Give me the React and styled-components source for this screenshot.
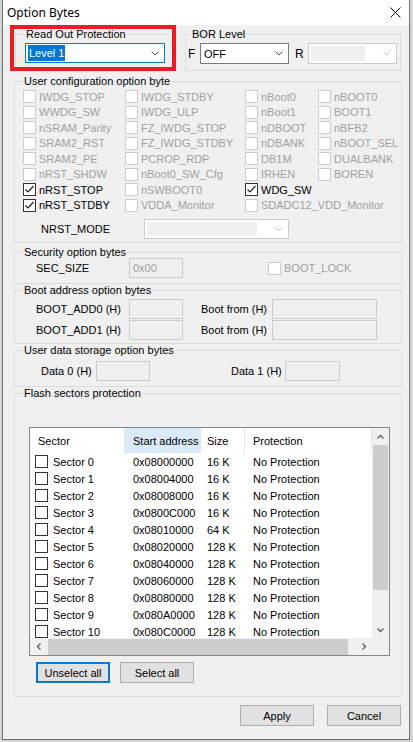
import styled, { createGlobalStyle } from "styled-components";

const GlobalStyle = createGlobalStyle`
  html, body {
    margin: 0;
    padding: 0;
  }
  body {
    width: 413px;
    height: 742px;
    overflow: hidden;
    background: #d4d4d4;
    font-family: "Liberation Sans", Arial, sans-serif;
    font-size: 11px;
    color: #000;
  }
`;

const opcoesColunas = [
  [
    ["IWDG_STOP"], ["WWDG_SW"], ["nSRAM_Parity"], ["SRAM2_RST"],
    ["SRAM2_PE"], ["nRST_SHDW"], ["nRST_STOP", true], ["nRST_STDBY", true],
  ],
  [
    ["IWDG_STDBY"], ["IWDG_ULP"], ["FZ_IWDG_STOP"], ["FZ_IWDG_STDBY"],
    ["PCROP_RDP"], ["nBoot0_SW_Cfg"], ["nSWBOOT0"], ["VDDA_Monitor"],
  ],
  [
    ["nBoot0"], ["nBoot1"], ["nDBOOT"], ["nDBANK"],
    ["DB1M"], ["IRHEN"], ["WDG_SW", true], ["SDADC12_VDD_Monitor"],
  ],
  [
    ["nBOOT0"], ["BOOT1"], ["nBFB2"], ["nBOOT_SEL"],
    ["DUALBANK"], ["BOREN"],
  ],
];

const setores = [
  ["0x08000000", "16 K"],
  ["0x08004000", "16 K"],
  ["0x08008000", "16 K"],
  ["0x0800C000", "16 K"],
  ["0x08010000", "64 K"],
  ["0x08020000", "128 K"],
  ["0x08040000", "128 K"],
  ["0x08060000", "128 K"],
  ["0x08080000", "128 K"],
  ["0x080A0000", "128 K"],
  ["0x080C0000", "128 K"],
];

function Chevron({ cor = "#555" }) {
  return (
    <svg width="8" height="5" viewBox="0 0 8 5">
      <polyline points="0.5,0.5 4,4 7.5,0.5" fill="none" stroke={cor} strokeWidth="1" />
    </svg>
  );
}

function Seta({ dir }) {
  const pontos = {
    up: "0.5,4.5 3.5,1.5 6.5,4.5",
    down: "0.5,1.5 3.5,4.5 6.5,1.5",
    left: "4.5,0.5 1.5,3.5 4.5,6.5",
    right: "1.5,0.5 4.5,3.5 1.5,6.5",
  }[dir];
  const horizontal = dir === "left" || dir === "right";
  return (
    <svg width={horizontal ? 6 : 7} height={horizontal ? 7 : 6} viewBox={horizontal ? "0 0 6 7" : "0 0 7 6"}>
      <polyline points={pontos} fill="none" stroke="#606060" strokeWidth="1.4" />
    </svg>
  );
}

function Caixa({ marcado, desativado }) {
  return (
    <Box $disabled={desativado}>
      {marcado && (
        <svg width="11" height="11" viewBox="0 0 11 11">
          <polyline points="1.5,5.5 4,8 9.5,2" fill="none" stroke="#222" strokeWidth="1.2" />
        </svg>
      )}
    </Box>
  );
}

export default function App() {
  return (
    <>
      <GlobalStyle />
      <Janela>
        <BarraTitulo>
          <span>Option Bytes</span>
          <svg width="11" height="11" viewBox="0 0 11 11">
            <path d="M0.5 0.5 L10.5 10.5 M10.5 0.5 L0.5 10.5" stroke="#111" strokeWidth="1" />
          </svg>
        </BarraTitulo>

        <Corpo>
          <Linha>
            <Grupo $w={158} $h={43} $ml={1}>
              <Legenda $ml={9}>Read Out Protection</Legenda>
              <Select $w={140} $focus style={{ marginTop: 3, marginLeft: 9 }}>
                <Valor>
                  <Selecionado>Level 1</Selecionado>
                </Valor>
                <Chevron />
              </Select>
            </Grupo>
            <Grupo $w={216} $h={43} $ml={12}>
              <Legenda $ml={5}>BOR Level</Legenda>
              <BorLinha>
                <Letra $w={12}>F</Letra>
                <Select $w={89} $h={21}>
                  <Valor>OFF</Valor>
                  <Chevron />
                </Select>
                <Letra $w={13} style={{ marginLeft: 6 }}>R</Letra>
                <Select $w={89} $h={21} $disabled>
                  <ValorDesativado />
                  <Chevron cor="#c4c4c4" />
                </Select>
              </BorLinha>
            </Grupo>
          </Linha>

          <Grupo $h={168} $mt={4}>
            <Legenda>User configuration option byte</Legenda>
            <GradeOpcoes>
              {opcoesColunas.flat().map(([nome, marcado]) => (
                <ItemCheck key={nome} $disabled={!marcado}>
                  <Caixa marcado={marcado} desativado={!marcado} />
                  {nome}
                </ItemCheck>
              ))}
            </GradeOpcoes>
            <LinhaNrst>
              <Rotulo $w={103}>NRST_MODE</Rotulo>
              <Select $w={145} $disabled>
                <ValorDesativado />
                <Chevron cor="#c4c4c4" />
              </Select>
            </LinhaNrst>
          </Grupo>

          <Grupo $h={38} $mt={3}>
            <Legenda>Security option bytes</Legenda>
            <LinhaCampos $pl={21}>
              <Rotulo $w={93}>SEC_SIZE</Rotulo>
              <Campo $w={54}>0x00</Campo>
              <ItemCheck $disabled style={{ marginLeft: 85 }}>
                <Caixa desativado />
                BOOT_LOCK
              </ItemCheck>
            </LinhaCampos>
          </Grupo>

          <Grupo $h={60}>
            <Legenda>Boot address option bytes</Legenda>
            <PilhaCampos>
              {["BOOT_ADD0 (H)", "BOOT_ADD1 (H)"].map((r) => (
                <LinhaCampos key={r} $pl={21}>
                  <Rotulo $w={93}>{r}</Rotulo>
                  <Campo $w={54} />
                  <Rotulo $w={71} style={{ marginLeft: 18 }}>Boot from (H)</Rotulo>
                  <Campo $w={105} />
                </LinhaCampos>
              ))}
            </PilhaCampos>
          </Grupo>

          <Grupo $h={43}>
            <Legenda>User data storage option bytes</Legenda>
            <LinhaCampos $pl={26} style={{ marginTop: 5 }}>
              <Rotulo $w={55}>Data 0 (H)</Rotulo>
              <Campo $w={54} />
              <Rotulo $w={54} style={{ marginLeft: 81 }}>Data 1 (H)</Rotulo>
              <Campo $w={55} />
            </LinhaCampos>
          </Grupo>

          <Grupo $h={310}>
            <Legenda>Flash sectors protection</Legenda>
            <Lista>
              <AreaLista>
                <Cabecalho>
                  <CelulaCab $pl={8}>Sector</CelulaCab>
                  <CelulaCab $pl={8} $hot>Start address</CelulaCab>
                  <CelulaCab $pl={6}>Size</CelulaCab>
                  <CelulaCab $pl={8}>Protection</CelulaCab>
                </Cabecalho>
                {setores.map(([endereco, tamanho], i) => (
                  <LinhaSetor key={endereco}>
                    <Celula $pl={5}>
                      <Caixa />
                      <span>Sector {i}</span>
                    </Celula>
                    <Celula $pl={8}>{endereco}</Celula>
                    <Celula $pl={6}>{tamanho}</Celula>
                    <Celula $pl={8}>No Protection</Celula>
                  </LinhaSetor>
                ))}
              </AreaLista>
              <BarraV>
                <BotaoSeta $v><Seta dir="up" /></BotaoSeta>
                <PolegarV />
                <Trilho />
                <BotaoSeta $v><Seta dir="down" /></BotaoSeta>
              </BarraV>
              <BarraH>
                <BotaoSeta><Seta dir="left" /></BotaoSeta>
                <PolegarH />
                <Trilho />
                <BotaoSeta><Seta dir="right" /></BotaoSeta>
              </BarraH>
              <Canto />
            </Lista>
            <LinhaBotoes>
              <Botao $focus>Unselect all</Botao>
              <Botao>Select all</Botao>
            </LinhaBotoes>
          </Grupo>

          <Rodape>
            <Botao>Apply</Botao>
            <Botao>Cancel</Botao>
          </Rodape>
        </Corpo>

        <Destaque />
      </Janela>
    </>
  );
}

const Janela = styled.div`
  position: relative;
  margin-left: 2px;
  width: 408px;
  height: 740px;
  box-sizing: border-box;
  background: #f0f0f0;
  border: 1px solid #707070;
  border-top: none;
`
const BarraTitulo = styled.div`
  height: 25px;
  background: #fff;
  display: flex;
  align-items: center;
  justify-content: space-between;
  padding: 0 8px 0 4px;
  font-family: "Noto Sans", "Open Sans", sans-serif;
  font-size: 12px;
  color: #000;
`
const Corpo = styled.div`
  display: flex;
  flex-direction: column;
  padding: 3px 7px 0 11px;
`
const Linha = styled.div`
  display: flex;
`
const Grupo = styled.fieldset`
  margin: ${(p) => p.$mt || 0}px 0 0 ${(p) => p.$ml || 0}px;
  padding: 0;
  min-width: 0;
  box-sizing: border-box;
  border: 1px solid #dcdcdc;
  width: ${(p) => (p.$w ? `${p.$w}px` : "auto")};
  height: ${(p) => p.$h}px;
`
const Legenda = styled.legend`
  margin-left: ${(p) => (p.$ml ?? 8)}px;
  padding: 0 1px;
  line-height: 12px;
  font-size: 11px;
  color: #000;
`
const Select = styled.div`
  display: flex;
  align-items: center;
  gap: 4px;
  box-sizing: border-box;
  width: ${(p) => p.$w}px;
  height: ${(p) => p.$h || 20}px;
  padding: ${(p) => (p.$disabled ? "2px" : "1px")};
  padding-right: 5px;
  background: #fff;
  border: 1px solid
    ${(p) => (p.$focus ? "#0078d7" : p.$disabled ? "#cccccc" : "#7a7a7a")};
`
const Valor = styled.div`
  flex: 1;
  height: 100%;
  display: flex;
  align-items: center;
  padding-left: 2px;
  color: #000;
`
const ValorDesativado = styled.div`
  flex: 1;
  height: 100%;
  margin-right: 14px;
  background: #f0f0f0;
`
const Selecionado = styled.span`
  margin-left: -1px;
  padding: 0 1px;
  line-height: 16px;
  background: #0078d7;
  color: #fff;
`
const BorLinha = styled.div`
  display: flex;
  align-items: center;
  margin: 3px 0 0 2px;
`
const Letra = styled.span`
  width: ${(p) => p.$w}px;
  font-size: 12px;
`
const GradeOpcoes = styled.div`
  display: grid;
  grid-auto-flow: column;
  grid-template-rows: repeat(8, 15.5px);
  grid-template-columns: 102px 120px 73px 1fr;
  padding: 2px 0 0 8px;
`
const ItemCheck = styled.div`
  display: flex;
  align-items: center;
  gap: 3px;
  white-space: nowrap;
  color: ${(p) => (p.$disabled ? "#a0a0a0" : "#000")};
`
const Box = styled.span`
  flex: none;
  display: inline-flex;
  align-items: center;
  justify-content: center;
  width: 13px;
  height: 13px;
  box-sizing: border-box;
  background: #fff;
  border: 1px solid ${(p) => (p.$disabled ? "#cccccc" : "#333333")};
`
const LinhaNrst = styled.div`
  display: flex;
  align-items: center;
  margin: 6px 0 0 26px;
`
const Rotulo = styled.span`
  width: ${(p) => p.$w}px;
  flex: none;
  white-space: nowrap;
`
const LinhaCampos = styled.div`
  display: flex;
  align-items: center;
  padding-left: ${(p) => p.$pl}px;
`
const PilhaCampos = styled.div`
  display: flex;
  flex-direction: column;
  gap: 1px;
  padding-top: 3px;
`
const Campo = styled.div`
  flex: none;
  width: ${(p) => p.$w}px;
  height: 20px;
  box-sizing: border-box;
  border: 1px solid #cccccc;
  background: #f0f0f0;
  color: #a0a0a0;
  padding-left: 3px;
  display: flex;
  align-items: center;
`
const Lista = styled.div`
  margin: 28px 0 0 14px;
  width: 361px;
  height: 229px;
  box-sizing: border-box;
  border: 1px solid #828790;
  background: #fff;
  display: grid;
  grid-template-columns: 1fr 17px;
  grid-template-rows: 1fr 17px;
`
const AreaLista = styled.div`
  overflow: hidden;
  display: flex;
  flex-direction: column;
`
const colunas = `
  display: grid;
  grid-template-columns: 95px 76px 44px 1fr;
  flex: none;
`
const Cabecalho = styled.div`
  ${colunas}
  height: 25px;
`
const CelulaCab = styled.div`
  display: flex;
  align-items: center;
  padding-left: ${(p) => p.$pl}px;
  background: ${(p) => (p.$hot ? "#d9ebf9" : "transparent")};
  border-right: 1px solid #e5e5e5;
  white-space: nowrap;
`
const LinhaSetor = styled.div`
  ${colunas}
  height: 17px;
`
const Celula = styled.div`
  display: flex;
  align-items: center;
  gap: 5px;
  padding-left: ${(p) => p.$pl}px;
  white-space: nowrap;
`
const BarraV = styled.div`
  grid-row: 1 / 2;
  grid-column: 2;
  display: flex;
  flex-direction: column;
  background: #f0f0f0;
`
const BarraH = styled.div`
  grid-row: 2;
  grid-column: 1;
  display: flex;
  background: #f0f0f0;
`
const BotaoSeta = styled.div`
  flex: none;
  width: 17px;
  height: 17px;
  display: flex;
  align-items: center;
  justify-content: center;
`
const PolegarV = styled.div`
  height: 145px;
  margin: 0 1px;
  background: #cdcdcd;
`
const PolegarH = styled.div`
  width: 300px;
  margin: 1px 0 0 1px;
  background: #cdcdcd;
`
const Trilho = styled.div`
  flex: 1;
`
const Canto = styled.div`
  background: #f0f0f0;
`
const LinhaBotoes = styled.div`
  display: flex;
  gap: 10px;
  margin: 6px 0 0 21px;
`
const Botao = styled.button`
  width: 74px;
  height: 21px;
  box-sizing: border-box;
  padding: 0;
  background: #e1e1e1;
  border: 1px solid ${(p) => (p.$focus ? "#0078d7" : "#adadad")};
  box-shadow: ${(p) => (p.$focus ? "inset 0 0 0 1px #0078d7" : "none")};
  font-family: "Liberation Sans", Arial, sans-serif;
  font-size: 11px;
  color: #000;
`
const Rodape = styled.div`
  display: flex;
  justify-content: flex-end;
  gap: 13px;
  margin: 8px 1px 0 0;
`
const Destaque = styled.div`
  position: absolute;
  left: 7px;
  top: 25px;
  width: 166px;
  height: 46px;
  box-sizing: border-box;
  border: 4px solid #ed1c24;
  pointer-events: none;
`
